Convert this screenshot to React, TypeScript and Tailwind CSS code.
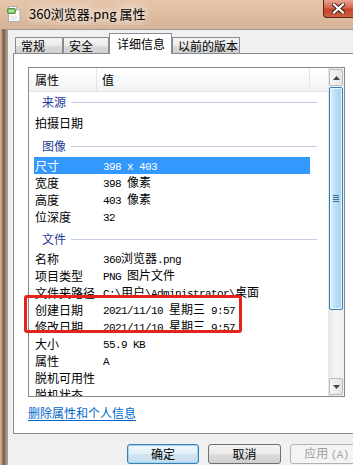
import React from "react";

type Item =
  | { kind: "group"; label: string; mt: string }
  | { kind: "row"; label: string; value?: string; selected?: boolean; mt?: string };

const items: Item[] = [
  { kind: "group", label: "来源", mt: "mt-0" },
  { kind: "row", label: "拍摄日期", mt: "mt-[2px]" },
  { kind: "group", label: "图像", mt: "mt-[5px]" },
  { kind: "row", label: "尺寸", value: "398 x 403", selected: true, mt: "mt-[1px]" },
  { kind: "row", label: "宽度", value: "398 像素" },
  { kind: "row", label: "高度", value: "403 像素" },
  { kind: "row", label: "位深度", value: "32" },
  { kind: "group", label: "文件", mt: "mt-[4px]" },
  { kind: "row", label: "名称", value: "360浏览器.png", mt: "mt-[1px]" },
  { kind: "row", label: "项目类型", value: "PNG 图片文件" },
  { kind: "row", label: "文件夹路径", value: "C:\\用户\\Administrator\\桌面" },
  { kind: "row", label: "创建日期", value: "2021/11/10 星期三 9:57" },
  { kind: "row", label: "修改日期", value: "2021/11/10 星期三 9:57" },
  { kind: "row", label: "大小", value: "55.9 KB" },
  { kind: "row", label: "属性", value: "A" },
  { kind: "row", label: "脱机可用性" },
  { kind: "row", label: "脱机状态" },
];

// latin parts look like SimSun's 6px-wide glyphs, cjk parts stay 12px
function Val({ t }: { t: string }) {
  return (
    <span>
      {t.split(/([\x00-\x7f]+)/).map((s, i) =>
        /^[\x00-\x7f]+$/.test(s) ? (
          <span key={i} className="font-['Liberation_Mono',monospace] text-[11px] tracking-[-0.6px]">
            {s}
          </span>
        ) : (
          <span key={i}>{s}</span>
        )
      )}
    </span>
  );
}

function FileIcon() {
  return (
    <svg width="14" height="16" viewBox="0 0 14 16">
      <path d="M1.5 0.5h8l3.5 3.5v11.5h-11.5z" fill="#fbfbfb" stroke="#a9aeb3" />
      <path d="M9.5 0.5v3.5h3.5" fill="#e6e8ea" stroke="#a9aeb3" />
      <rect x="0.5" y="2.5" width="8" height="5" rx="1" fill="#7fbf6a" stroke="#4f9a3d" />
      <rect x="2" y="4" width="5" height="2" fill="#b9e0a8" />
      <path d="M3 11h7M3 13h7" stroke="#d4d8dc" />
    </svg>
  );
}

function Tab({ label, w, active }: { label: string; w: string; active?: boolean }) {
  if (active) {
    return (
      <div className={`${w} h-[21px] border border-b-0 border-[#898c95] bg-white pl-[7px] text-[12px] leading-[19px] text-black relative z-10`}>
        {label}
      </div>
    );
  }
  return (
    <div
      className={`${w} h-[16px] mb-px border border-b-0 border-[#898c95] bg-[linear-gradient(180deg,#f4f4f4_0%,#ebebeb_50%,#dcdcdc_51%,#cfcfcf_100%)] pl-[5px] text-[12px] leading-[15px] text-black`}
    >
      {label}
    </div>
  );
}

function Btn({ label, w, primary, disabled }: { label: React.ReactNode; w: string; primary?: boolean; disabled?: boolean }) {
  let cls = "border-[#707070] bg-[linear-gradient(180deg,#f2f2f2_0%,#ebebeb_50%,#dddddd_51%,#cfcfcf_100%)] text-black";
  if (primary)
    cls = "border-[#3c7fb1] bg-[linear-gradient(180deg,#f0f7fc_0%,#e3eff8_50%,#d3e4f1_51%,#c4dcee_100%)] shadow-[inset_0_0_0_1px_#9fd6f7] text-black";
  if (disabled) cls = "border-[#adb2b5] bg-[#f4f4f4] text-[#a0a0a0]";
  return (
    <div className={`${w} h-[20px] shrink-0 rounded-[3px] border ${cls} flex items-center justify-center text-[12px] leading-none`}>
      {label}
    </div>
  );
}

export default function App() {
  return (
    <div className="w-[353px] h-[465px] overflow-hidden relative flex flex-col font-['Noto_Sans_CJK_SC','Noto_Sans',sans-serif] bg-[#d9b597]">
      {/* title bar */}
      <div className="h-[29px] shrink-0 flex items-start bg-[linear-gradient(180deg,#e6c6ab_0%,#dcba9d_60%,#d6b396_100%)] relative">
        <div className="ml-[7px] mt-[6px]">
          <FileIcon />
        </div>
        <div className="ml-[8px] mt-[5px] text-[13px] leading-[18px] text-black [text-shadow:0_0_8px_#fff,0_0_12px_#fff]">
          360浏览器.png 属性
        </div>
        <div className="absolute right-[-8px] top-0 w-[38px] h-[18px] rounded-bl-[4px] border border-t-0 border-[#5b2419] bg-[linear-gradient(180deg,#e9a591_0%,#d4674f_45%,#c2432a_55%,#d0603f_100%)] flex items-center pl-[8px]">
          <svg width="13" height="11" viewBox="0 0 13 11">
            <path d="M2 1.5l9 8M11 1.5l-9 8" stroke="#3a2018" strokeWidth="4" strokeLinecap="square" />
            <path d="M2 1.5l9 8M11 1.5l-9 8" stroke="#fff" strokeWidth="2.2" strokeLinecap="square" />
          </svg>
        </div>
      </div>

      <div className="flex flex-1">
        {/* left frame */}
        <div className="w-[7px] shrink-0 bg-[linear-gradient(90deg,#d8b89e_0%,#b39379_25%,#7a6150_50%,#8e7461_75%,#c2a790_100%)]" />

        <div className="flex-1 bg-[#f0f0f0] border-t border-l border-[#9a9ca0] flex flex-col pl-[5px]">
          {/* tabs */}
          <div className="flex items-end pl-[2px] pt-[3px] h-[24px] -mb-px relative z-10">
            <Tab label="常规" w="w-[48px]" />
            <Tab label="安全" w="w-[46px]" />
            <Tab label="详细信息" w="w-[63px]" active />
            <Tab label="以前的版本" w="w-[68px]" />
          </div>

          {/* tab page */}
          <div className="w-[345px] h-[381px] shrink-0 border border-[#898c95] bg-white pl-[14px] pt-[13px] flex flex-col">
            <div className="w-[317px] h-[330px] border border-[#828790] flex overflow-hidden">
              <div className="flex-1 flex flex-col overflow-hidden">
                {/* column header */}
                <div className="h-[24px] shrink-0 flex border-b border-[#e5e5e5] bg-[linear-gradient(180deg,#ffffff_0%,#f7f8f9_60%,#f1f2f4_100%)] text-[12px] text-black">
                  <div className="w-[68px] pl-[6px] leading-[24px] border-r border-[#e3e4e8]">属性</div>
                  <div className="w-[213px] pl-[5px] leading-[24px] border-r border-[#e3e4e8]">值</div>
                  <div className="flex-1" />
                </div>

                <div className="flex flex-col pl-[5px] text-[12px] text-black">
                  {items.map((it, i) =>
                    it.kind === "group" ? (
                      <div key={i} className={`${it.mt} w-[283px] h-[20px] shrink-0 flex items-center pl-[8px]`}>
                        <span className="text-[#1f3c99] leading-none">{it.label}</span>
                        <div className="flex-1 ml-[5px] h-px bg-[#c5cde2]" />
                      </div>
                    ) : (
                      <div
                        key={i}
                        className={`${it.mt ?? ""} w-[276px] h-[17px] shrink-0 flex items-center leading-none ${
                          it.selected ? "bg-[#3399ff] text-white" : ""
                        }`}
                      >
                        <div className="w-[69px] pl-[1px] whitespace-nowrap">{it.label}</div>
                        <div className="whitespace-nowrap">{it.value ? <Val t={it.value} /> : null}</div>
                      </div>
                    )
                  )}
                </div>
              </div>

              {/* scrollbar */}
              <div className="w-[16px] shrink-0 bg-[linear-gradient(90deg,#e6e6e6,#f4f4f4_40%,#f0f0f0)] flex flex-col items-center py-px">
                <div className="w-[14px] h-[17px] rounded-[2px] border border-[#b8babd] bg-[linear-gradient(90deg,#f6f6f6,#e4e4e4)] flex items-center justify-center">
                  <svg width="7" height="4" viewBox="0 0 7 4">
                    <path d="M0 4h7L3.5 0z" fill="#444" />
                  </svg>
                </div>
                <div className="mt-px w-[14px] h-[223px] rounded-[2px] border border-[#3c7fb1] bg-[linear-gradient(90deg,#e3f4fc_0%,#c4e6f8_30%,#b2dcf4_60%,#a5d3ef_100%)] shadow-[inset_0_0_0_1px_#e9f6fd] flex flex-col items-center justify-center gap-px">
                  <div className="w-[6px] h-px bg-[#3a6f98]" />
                  <div className="w-[6px] h-px bg-[#3a6f98]" />
                  <div className="w-[6px] h-px bg-[#3a6f98]" />
                  <div className="w-[6px] h-px bg-[#3a6f98]" />
                </div>
                <div className="flex-1" />
                <div className="w-[14px] h-[17px] rounded-[2px] border border-[#b8babd] bg-[linear-gradient(90deg,#f6f6f6,#e4e4e4)] flex items-center justify-center">
                  <svg width="7" height="4" viewBox="0 0 7 4">
                    <path d="M0 0h7L3.5 4z" fill="#444" />
                  </svg>
                </div>
              </div>
            </div>

            <div className="mt-[9px] h-[14px] text-[12px] leading-[14px] text-[#0066cc] underline underline-offset-2">
              删除属性和个人信息
            </div>
          </div>

          {/* buttons */}
          <div className="flex gap-[9px] pl-[114px] mt-[10px]">
            <Btn label="确定" w="w-[72px]" primary />
            <Btn label="取消" w="w-[73px]" />
            <Btn
              label={
                <span>
                  应用 <span className="font-['Liberation_Mono',monospace] text-[11px] tracking-[-0.6px]">(A)</span>
                </span>
              }
              w="w-[73px]"
              disabled
            />
          </div>
        </div>
      </div>

      {/* red annotation box */}
      <div className="absolute left-[24px] top-[295px] w-[218px] h-[38px] border-[3px] border-[#e3231c] rounded-[3px]" />
    </div>
  );
}
